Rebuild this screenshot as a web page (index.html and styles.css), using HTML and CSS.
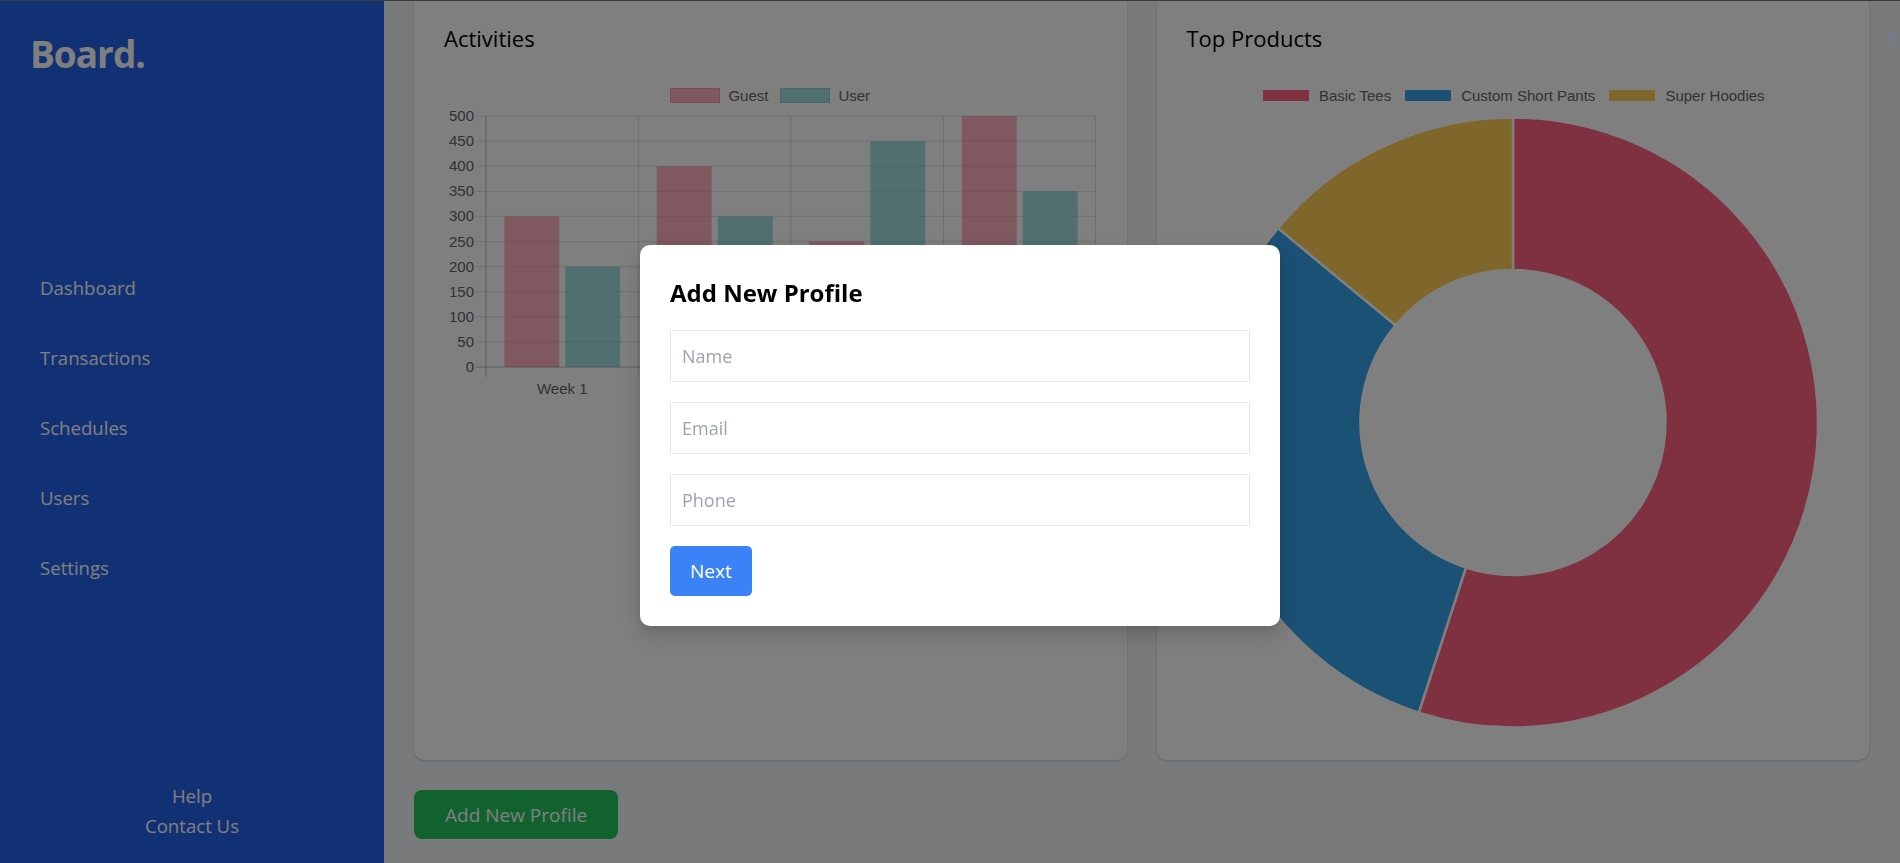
FILE: index.html
```html
<!DOCTYPE html>
<html lang="en">
<head>
<meta charset="utf-8">
<title>Board.</title>
<link rel="stylesheet" href="styles.css">
</head>
<body>
<div class="app">
  <aside class="sidebar">
    <div class="logo">Board.</div>
    <nav class="nav">
      <a class="nav-link" href="#">Dashboard</a>
      <a class="nav-link" href="#">Transactions</a>
      <a class="nav-link" href="#">Schedules</a>
      <a class="nav-link" href="#">Users</a>
      <a class="nav-link" href="#">Settings</a>
    </nav>
    <div class="side-footer">
      <a class="footer-link" href="#">Help</a>
      <a class="footer-link" href="#">Contact Us</a>
    </div>
  </aside>
  <main class="main">
    <div class="cards">
      <section class="card">
        <h2 class="card-title">Activities</h2>
        <div class="legend">
          <span class="legend-item"><span class="swatch swatch-guest"></span>Guest</span>
          <span class="legend-item"><span class="swatch swatch-user"></span>User</span>
        </div>
        <svg class="chart" width="652" height="300" viewBox="0 0 652 300">
          <g class="grid">
            <line x1="32" y1="10" x2="652" y2="10"/>
            <line x1="32" y1="35.1" x2="652" y2="35.1"/>
            <line x1="32" y1="60.2" x2="652" y2="60.2"/>
            <line x1="32" y1="85.3" x2="652" y2="85.3"/>
            <line x1="32" y1="110.4" x2="652" y2="110.4"/>
            <line x1="32" y1="135.5" x2="652" y2="135.5"/>
            <line x1="32" y1="160.6" x2="652" y2="160.6"/>
            <line x1="32" y1="185.7" x2="652" y2="185.7"/>
            <line x1="32" y1="210.8" x2="652" y2="210.8"/>
            <line x1="32" y1="235.9" x2="652" y2="235.9"/>
            <line x1="194.5" y1="10" x2="194.5" y2="271"/>
            <line x1="347" y1="10" x2="347" y2="271"/>
            <line x1="499.5" y1="10" x2="499.5" y2="271"/>
            <line x1="651.5" y1="10" x2="651.5" y2="271"/>
          </g>
          <g class="axis">
            <line x1="32" y1="261" x2="652" y2="261"/>
            <line x1="42" y1="10" x2="42" y2="271"/>
          </g>
          <g class="ticks-y">
            <text x="30" y="15">500</text>
            <text x="30" y="40.1">450</text>
            <text x="30" y="65.2">400</text>
            <text x="30" y="90.3">350</text>
            <text x="30" y="115.4">300</text>
            <text x="30" y="140.5">250</text>
            <text x="30" y="165.6">200</text>
            <text x="30" y="190.7">150</text>
            <text x="30" y="215.8">100</text>
            <text x="30" y="240.9">50</text>
            <text x="30" y="266">0</text>
          </g>
          <g class="ticks-x">
            <text x="118.25" y="288">Week 1</text>
            <text x="270.75" y="288">Week 2</text>
            <text x="423.25" y="288">Week 3</text>
            <text x="575.75" y="288">Week 4</text>
          </g>
          <g class="bars-guest">
            <rect x="60.3" y="110.4" width="54.9" height="150.6"/>
            <rect x="212.8" y="60.2" width="54.9" height="200.8"/>
            <rect x="365.3" y="135.5" width="54.9" height="125.5"/>
            <rect x="517.8" y="10" width="54.9" height="251"/>
          </g>
          <g class="bars-user">
            <rect x="121.3" y="160.6" width="54.9" height="100.4"/>
            <rect x="273.8" y="110.4" width="54.9" height="150.6"/>
            <rect x="426.3" y="35.1" width="54.9" height="225.9"/>
            <rect x="578.8" y="85.3" width="54.9" height="175.7"/>
          </g>
        </svg>
      </section>
      <section class="card">
        <h2 class="card-title">Top Products</h2>
        <div class="legend">
          <span class="legend-item"><span class="swatch swatch-tees"></span>Basic Tees</span>
          <span class="legend-item"><span class="swatch swatch-pants"></span>Custom Short Pants</span>
          <span class="legend-item"><span class="swatch swatch-hoodies"></span>Super Hoodies</span>
        </div>
        <svg class="chart" width="652" height="622" viewBox="0 0 652 622">
          <path class="seg-tees" d="M326,11.5 A305,305 0 1 1 231.75,606.57 L278.87,461.54 A152.5,152.5 0 1 0 326,164 Z"/>
          <path class="seg-pants" d="M231.75,606.57 A305,305 0 0 1 91,122.09 L208.5,219.29 A152.5,152.5 0 0 0 278.87,461.54 Z"/>
          <path class="seg-hoodies" d="M91,122.09 A305,305 0 0 1 326,11.5 L326,164 A152.5,152.5 0 0 0 208.5,219.29 Z"/>
        </svg>
      </section>
    </div>
    <button class="add-btn" type="button">Add New Profile</button>
  </main>
</div>
<div class="overlay">
  <span class="close-x"><svg width="9" height="9" viewBox="0 0 9 9"><path d="M0.5 0.5 L8.5 8.5 M8.5 0.5 L0.5 8.5"/></svg></span>
  <form class="modal">
    <h2 class="modal-title">Add New Profile</h2>
    <input class="field" type="text" placeholder="Name">
    <input class="field" type="email" placeholder="Email">
    <input class="field" type="tel" placeholder="Phone">
    <button class="next-btn" type="button">Next</button>
  </form>
</div>
</body>
</html>
```
FILE: styles.css
```css
html, body {
  margin: 0;
  height: 100%;
}

body {
  box-sizing: border-box;
  border-top: 1px solid #747474;
  overflow: hidden;
  background: #f3f4f6;
  font-family: "Open Sans", "Noto Sans", sans-serif;
}

.app {
  display: flex;
  height: 862px;
}

/* Sidebar */
.sidebar {
  width: 384px;
  flex: none;
  background: #2563eb;
  color: #fff;
  display: flex;
  flex-direction: column;
}

.logo {
  font-size: 37px;
  font-weight: 700;
  line-height: 48px;
  letter-spacing: -1px;
  padding: 29px 0 0 30px;
}

.nav {
  margin-top: 195px;
  padding-left: 40px;
  display: flex;
  flex-direction: column;
  gap: 40px;
}

.nav-link,
.footer-link {
  color: #fff;
  text-decoration: none;
  font-size: 18.6px;
  line-height: 30px;
}

.side-footer {
  margin-top: auto;
  padding-bottom: 22px;
  display: flex;
  flex-direction: column;
  align-items: center;
}

/* Main */
.main {
  flex: 1;
  min-width: 0;
  padding: 0 31px 0 30px;
  display: flex;
  flex-direction: column;
  align-items: flex-start;
}

.cards {
  width: 100%;
  margin-top: -10px;
  display: grid;
  grid-template-columns: repeat(2, minmax(0, 1fr));
  gap: 30px;
}

.card {
  background: #fff;
  border-radius: 10px;
  padding: 32px 30px;
  box-shadow: 0 1px 3px rgba(0, 0, 0, 0.12), 0 1px 2px rgba(0, 0, 0, 0.06);
}

.card-title {
  margin: 0;
  font-size: 22px;
  font-weight: 500;
  line-height: 30px;
  color: #000;
}

.legend {
  margin-top: 32px;
  height: 20px;
  display: flex;
  justify-content: center;
  align-items: center;
  gap: 12px;
  font-family: "Liberation Sans", Arial, sans-serif;
  font-size: 15px;
  color: #666;
}

.legend-item {
  display: flex;
  align-items: center;
  gap: 8px;
}

.swatch {
  box-sizing: border-box;
  width: 50px;
  height: 15px;
}

.swatch-guest {
  background: rgba(255, 99, 132, 0.5);
  border: 1px solid rgba(255, 99, 132, 0.35);
}

.swatch-user {
  background: rgba(75, 192, 192, 0.5);
  border: 1px solid rgba(75, 192, 192, 0.35);
}

.swatch-tees {
  background: rgb(255, 99, 132);
  border: 2px solid #fff;
}

.swatch-pants {
  background: rgb(54, 162, 235);
  border: 2px solid #fff;
}

.swatch-hoodies {
  background: rgb(255, 206, 86);
  border: 2px solid #fff;
}

.chart {
  display: block;
  margin-top: 1px;
  overflow: visible;
}

.grid line {
  stroke: rgba(0, 0, 0, 0.1);
  stroke-width: 1.25;
}

.axis line {
  stroke: rgba(0, 0, 0, 0.22);
  stroke-width: 1.25;
}

.ticks-y text,
.ticks-x text {
  font-family: "Liberation Sans", Arial, sans-serif;
  font-size: 15px;
  fill: #666;
}

.ticks-y text {
  text-anchor: end;
}

.ticks-x text {
  text-anchor: middle;
}

.bars-guest rect {
  fill: rgba(255, 99, 132, 0.5);
}

.bars-user rect {
  fill: rgba(75, 192, 192, 0.5);
}

.seg-tees,
.seg-pants,
.seg-hoodies {
  stroke: #fff;
  stroke-width: 2.5;
  stroke-linejoin: round;
}

.seg-tees {
  fill: rgb(255, 99, 132);
}

.seg-pants {
  fill: rgb(54, 162, 235);
}

.seg-hoodies {
  fill: rgb(255, 206, 86);
}

.add-btn {
  margin-top: 30px;
  height: 49px;
  padding: 0 31px;
  border: none;
  border-radius: 8px;
  background: #22c55e;
  color: #fff;
  font-family: inherit;
  font-size: 19px;
}

/* Modal overlay */
.overlay {
  position: fixed;
  inset: 0;
  padding-left: 20px;
  background: rgba(0, 0, 0, 0.5);
  display: flex;
  align-items: center;
  justify-content: center;
}

.close-x {
  position: absolute;
  top: 34px;
  right: 3px;
  display: block;
  line-height: 0;
}

.close-x path {
  stroke: #737b9c;
  stroke-width: 1.4;
  fill: none;
}

.modal {
  box-sizing: border-box;
  width: 640px;
  margin-top: 7px;
  padding: 32px 30px 30px;
  background: #fff;
  border-radius: 10px;
  box-shadow: 0 10px 25px rgba(0, 0, 0, 0.15), 0 4px 10px rgba(0, 0, 0, 0.08);
  display: flex;
  flex-direction: column;
  align-items: flex-start;
}

.modal-title {
  margin: 0 0 21px;
  font-size: 24px;
  font-weight: 700;
  line-height: 32px;
  color: #000;
}

.field {
  box-sizing: border-box;
  width: 100%;
  height: 52px;
  margin: 0 0 20px;
  padding: 0 11px;
  border: 1px solid #e5e7eb;
  border-radius: 0;
  outline: none;
  font-family: inherit;
  font-size: 18px;
  color: #111;
}

.field::placeholder {
  color: #9ca3af;
}

.next-btn {
  height: 50px;
  padding: 0 20px;
  border: none;
  border-radius: 5px;
  background: #3b82f6;
  color: #fff;
  font-family: inherit;
  font-size: 19px;
}
```
